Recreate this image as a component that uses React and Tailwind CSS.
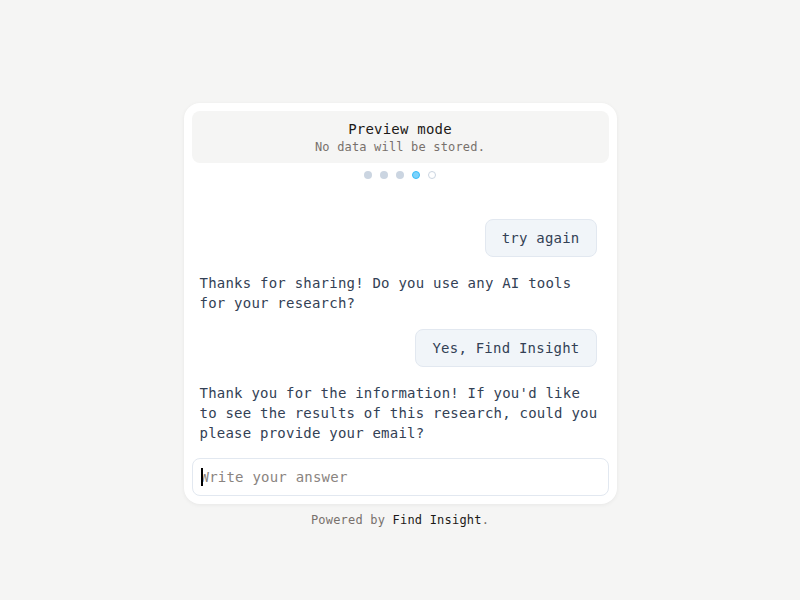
export default function App() {
  const mono = { fontFamily: '"DejaVu Sans Mono", "Liberation Mono", monospace' };
  return (
    <div className="min-h-screen w-full bg-[#f5f5f4] pt-[103px]" style={mono}>
      <div className="mx-auto w-[433px] rounded-2xl bg-white p-2 shadow-[0_1px_4px_rgba(0,0,0,0.06)]">
        <div className="rounded-lg bg-[#f5f5f4] py-2 text-center">
          <div className="text-[14px] leading-5 tracking-[0.2px] text-[#1c1917]">Preview mode</div>
          <div className="text-[12px] leading-4 tracking-[0.17px] text-[#78716c]">No data will be stored.</div>
        </div>
        <div className="mt-2 flex justify-center gap-2">
          <span className="h-2 w-2 rounded-full bg-[#cbd5e1]" />
          <span className="h-2 w-2 rounded-full bg-[#cbd5e1]" />
          <span className="h-2 w-2 rounded-full bg-[#cbd5e1]" />
          <span className="h-2 w-2 rounded-full border border-[#38bdf8] bg-[#7dd3fc]" />
          <span className="h-2 w-2 rounded-full border border-[#cbd5e1] bg-white" />
        </div>
        <div className="flex flex-col gap-4 pl-2 pr-1 pt-10 text-[14px] leading-5 tracking-[0.22px] text-[#334155]">
          <div className="flex justify-end pr-2">
            <div className="rounded-lg border border-[#e2e8f0] bg-[#f1f5f9] px-4 py-2">try again</div>
          </div>
          <div className="pr-6">Thanks for sharing! Do you use any AI tools for your research?</div>
          <div className="flex justify-end pr-2">
            <div className="rounded-lg border border-[#e2e8f0] bg-[#f1f5f9] px-4 py-2">Yes, Find Insight</div>
          </div>
          <div>Thank you for the information! If you'd like to see the results of this research, could you please provide your email?</div>
        </div>
        <div className="relative mt-[15px]">
          <input
            className="block h-[38px] w-full rounded-lg border border-[#e2e8f0] bg-white px-2 text-[14px] tracking-[0.22px] text-[#334155] outline-none placeholder:text-[#8a8480]"
            style={mono}
            placeholder="Write your answer"
          />
          <div className="pointer-events-none absolute left-[9px] top-[10px] h-[18px] w-[2px] bg-black" />
        </div>
      </div>
      <div className="mt-2 text-center text-[12px] leading-4 tracking-[0.2px] text-[#78716c]">
        Powered by <span className="text-[#1c1917]">Find Insight</span>.
      </div>
    </div>
  );
}
